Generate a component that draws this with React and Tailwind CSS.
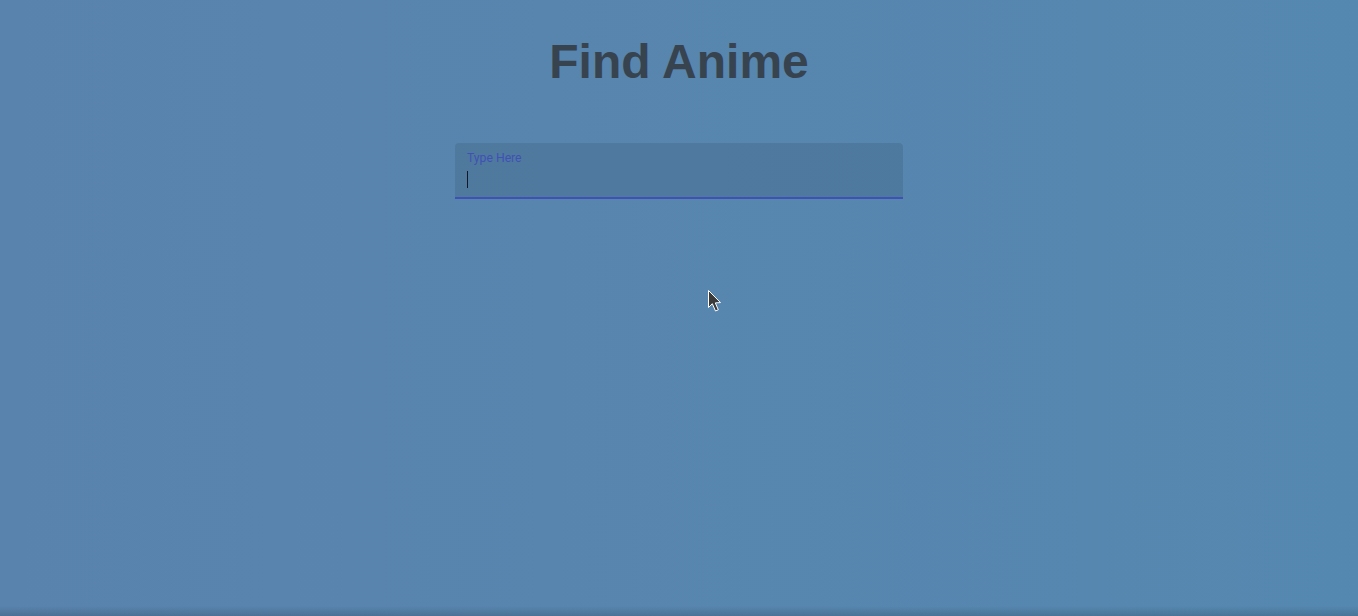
import React from "react";

export default function App() {
  return (
    <div className="relative h-[616px] w-full overflow-hidden bg-gradient-to-r from-[#5983ad] to-[#5588b0] font-['Liberation_Sans',Arial,sans-serif]">
      <div className="flex flex-col items-center pt-[34px]">
        <h1 className="text-[48px] font-bold leading-[55px] text-[#37434f]">Find Anime</h1>
        <div className="mt-[54px] w-[448px]">
          <div className="relative h-[56px] rounded-t-[4px] bg-[rgba(0,0,0,0.09)] border-b-2 border-[#3f51b5]">
            <span className="absolute left-[12px] top-[8px] text-[12.2px] leading-[14px] text-[#3f51b5] font-['Roboto',sans-serif]">Type Here</span>
            <div className="absolute left-[12px] top-[28px] h-[17px] w-px bg-[#111827]"></div>
          </div>
        </div>
      </div>
      <svg className="absolute left-[707px] top-[289px]" width="18" height="26" viewBox="0 0 18 26">
        <path d="M1.5 1.5 L1.5 18.5 L5.3 14.7 L8.5 22 L11.3 20.8 L8.3 13.9 L13.5 13.6 Z" fill="#3a3a3a" stroke="#ffffff" strokeWidth="1" strokeLinejoin="round" />
      </svg>
      <div className="absolute bottom-0 left-0 right-0 h-[10px] bg-gradient-to-b from-transparent to-[rgba(0,0,0,0.14)]"></div>
    </div>
  );
}
